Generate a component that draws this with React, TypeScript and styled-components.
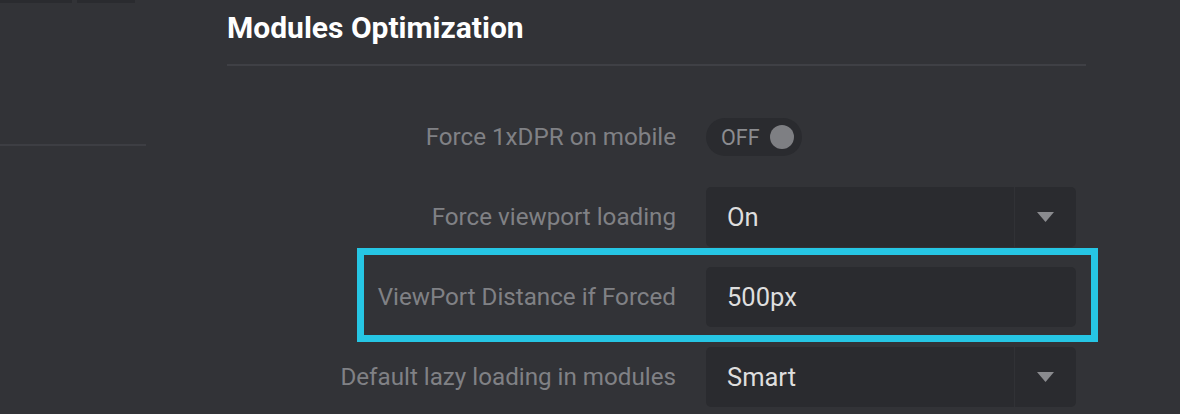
import React from "react";
import styled, { createGlobalStyle } from "styled-components";

const GlobalStyle = createGlobalStyle`
  html, body {
    margin: 0;
    padding: 0;
    background: #323337;
    font-family: Roboto, "Liberation Sans", Arial, sans-serif;
  }
`;

const Page = styled.div`
  display: flex;
  width: 1180px;
  height: 414px;
  overflow: hidden;
  background: #323337;
`;

const Sidebar = styled.aside`
  width: 146px;
  flex-shrink: 0;
`;

const Tabs = styled.div`
  display: flex;
  gap: 5px;
  height: 3px;
`;

const Tab = styled.div<{ $w: number }>`
  width: ${(p) => p.$w}px;
  background: #2a2b2f;
`;

const SideRule = styled.div`
  margin-top: 141px;
  height: 2px;
  background: #3d3e43;
`;

const Main = styled.main`
  margin-left: 81px;
  width: 859px;
`;

const Title = styled.h2`
  margin: 0;
  padding-top: 10px;
  height: 66px;
  box-sizing: border-box;
  font-size: 30px;
  line-height: 35px;
  font-weight: 700;
  color: #ffffff;
  border-bottom: 2px solid #3f4045;
`;

const Rows = styled.div`
  padding-top: 31px;
`;

const Row = styled.div`
  position: relative;
  display: grid;
  grid-template-columns: 449px 370px;
  column-gap: 30px;
  align-items: center;
  height: 80px;
`;

const Label = styled.label`
  text-align: right;
  font-size: 24.2px;
  color: #808185;
`;

const Highlight = styled.span`
  position: absolute;
  top: -9px;
  bottom: -5px;
  left: 130px;
  right: -12px;
  border: 7px solid #26c6e4;
  pointer-events: none;
`;

const Toggle = styled.div`
  display: flex;
  align-items: center;
  width: 96px;
  height: 38px;
  box-sizing: border-box;
  padding: 0 8px 0 15px;
  border-radius: 19px;
  background: #2a2b2f;
`;

const ToggleText = styled.span`
  font-size: 21.5px;
  color: #8b8c90;
  flex: 1;
`;

const Knob = styled.span`
  width: 24px;
  height: 24px;
  border-radius: 50%;
  background: #7e7f83;
`;

const Select = styled.div`
  display: flex;
  height: 60px;
  border-radius: 5px;
  background: #2a2b2f;
  overflow: hidden;
`;

const SelectValue = styled.div`
  flex: 1;
  display: flex;
  align-items: center;
  padding-left: 21px;
  font-size: 25.5px;
  color: #dedede;
`;

const Arrow = styled.div`
  width: 61px;
  display: flex;
  align-items: center;
  justify-content: center;
  border-left: 1px solid #313236;
`;

const Input = styled.input`
  height: 60px;
  box-sizing: border-box;
  width: 100%;
  padding: 0 0 0 21px;
  border: none;
  outline: none;
  border-radius: 5px;
  background: #2a2b2f;
  font-family: inherit;
  font-size: 25.5px;
  color: #dedede;
`;

const Caret = () => (
  <svg width="17" height="10" viewBox="0 0 17 10">
    <polygon points="0,0 17,0 8.5,10" fill="#8a8b8f" />
  </svg>
);

const Dropdown: React.FC<{ value: string }> = ({ value }) => (
  <Select>
    <SelectValue>{value}</SelectValue>
    <Arrow>
      <Caret />
    </Arrow>
  </Select>
);

const App = (): JSX.Element => {
  return (
    <>
      <GlobalStyle />
      <Page>
        <Sidebar>
          <Tabs>
            <Tab $w={72} />
            <Tab $w={58} />
          </Tabs>
          <SideRule />
        </Sidebar>
        <Main>
          <Title>Modules Optimization</Title>
          <Rows>
            <Row>
              <Label>Force 1xDPR on mobile</Label>
              <Toggle>
                <ToggleText>OFF</ToggleText>
                <Knob />
              </Toggle>
            </Row>
            <Row>
              <Label>Force viewport loading</Label>
              <Dropdown value="On" />
            </Row>
            <Row>
              <Highlight />
              <Label>ViewPort Distance if Forced</Label>
              <Input readOnly value="500px" />
            </Row>
            <Row>
              <Label>Default lazy loading in modules</Label>
              <Dropdown value="Smart" />
            </Row>
          </Rows>
        </Main>
      </Page>
    </>
  );
};

export default App;
